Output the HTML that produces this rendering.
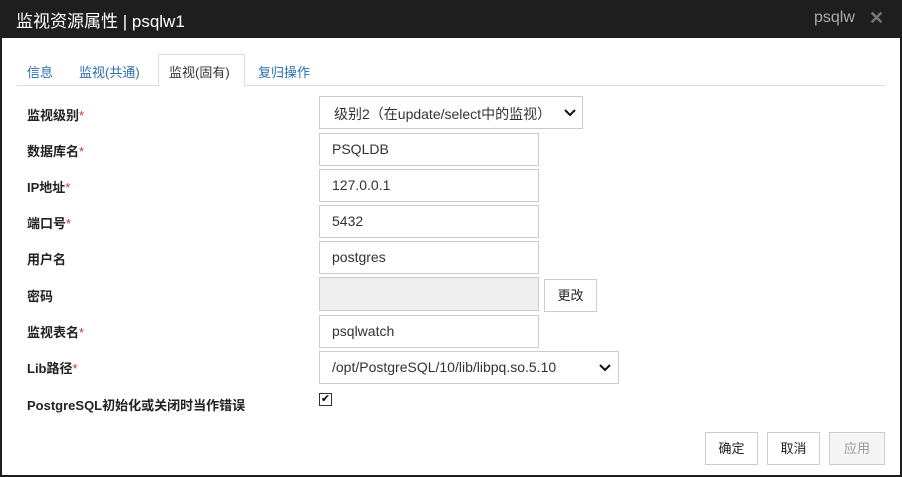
<!DOCTYPE html><html><head><meta charset="utf-8"><style>
*{box-sizing:border-box}body{margin:0;width:902px;height:477px;background:#1e1e1e;font-family:"Liberation Sans","Noto Sans CJK SC",sans-serif;position:relative;overflow:hidden}
.hd{position:absolute;left:0;top:0;width:902px;height:38px;background:#1e1e1e;color:#fff;font-size:17px}
.bd{position:absolute;left:2px;top:38px;width:898px;height:437px;background:#fff}
.a{position:absolute}
.lb{position:absolute;left:25px;font-size:13px;font-weight:bold;color:#222}
.lb i{color:#c0392b;font-style:normal;font-weight:normal}
.in{position:absolute;left:317px;width:220px;height:33px;border:1px solid #ccc;font-size:14px;color:#333;padding:7px 12px}
.btn{position:absolute;border:1px solid #ccc;background:#fff;font-size:13px;color:#222;text-align:center;line-height:31px;height:33px}
.chev{position:absolute;right:6px;top:11px}
</style></head><body>
<div class="hd"><span class="a" style="left:16px;top:7px">监视资源属性 | psqlw1</span><span class="a" style="left:814px;top:9px;color:#aaa;font-size:16px">psqlw</span><span class="a" style="left:869px;top:8px;color:#777;font-size:18px;font-weight:bold">✕</span></div>
<div class="bd">
<div class="a" style="left:15px;top:47px;width:868px;height:1px;background:#ddd"></div>
<div class="a" style="left:156px;top:16px;width:87px;height:32px;border:1px solid #ddd;border-bottom:none;background:#fff"></div>
<span class="a" style="left:25px;top:24px;font-size:13px;color:#2a6fb0">信息</span>
<span class="a" style="left:77px;top:24px;font-size:13px;color:#2a6fb0">监视(共通)</span>
<span class="a" style="left:167px;top:24px;font-size:13px;color:#333">监视(固有)</span>
<span class="a" style="left:256px;top:24px;font-size:13px;color:#2a6fb0">复归操作</span>
<div class="lb" style="top:67px">监视级别<i>*</i></div>
<div class="in" style="top:58px;width:264px;padding-left:14px">级别2（在update/select中的监视）<svg class="chev" width="12" height="9" viewBox="0 0 12 9"><polyline points="1,2 6,7 11,2" fill="none" stroke="#111" stroke-width="2"/></svg></div>
<div class="lb" style="top:103px">数据库名<i>*</i></div><div class="in" style="top:95px">PSQLDB</div>
<div class="lb" style="top:139px">IP地址<i>*</i></div><div class="in" style="top:131px">127.0.0.1</div>
<div class="lb" style="top:175px">端口号<i>*</i></div><div class="in" style="top:167px">5432</div>
<div class="lb" style="top:211px">用户名</div><div class="in" style="top:203px">postgres</div>
<div class="lb" style="top:248px">密码</div><div class="in" style="top:239px;background:#eee;height:34px"></div>
<div class="btn" style="left:542px;top:241px;width:53px">更改</div>
<div class="lb" style="top:284px">监视表名<i>*</i></div><div class="in" style="top:277px">psqlwatch</div>
<div class="lb" style="top:320px">Lib路径<i>*</i></div>
<div class="in" style="top:313px;width:300px">/opt/PostgreSQL/10/lib/libpq.so.5.10<svg class="chev" style="right:7px" width="12" height="9" viewBox="0 0 12 9"><polyline points="1,2 6,7 11,2" fill="none" stroke="#111" stroke-width="2"/></svg></div>
<div class="lb" style="top:357px">PostgreSQL初始化或关闭时当作错误</div>
<div class="a" style="left:317px;top:355px;width:13px;height:13px;border:1px solid #333;font-size:11px;line-height:11px;text-align:center">✔</div>
<div class="btn" style="left:703px;top:394px;width:53px">确定</div>
<div class="btn" style="left:765px;top:394px;width:53px">取消</div>
<div class="btn" style="left:827px;top:394px;width:56px;color:#999;background:#f5f5f5">应用</div>
</div>
</body></html>
